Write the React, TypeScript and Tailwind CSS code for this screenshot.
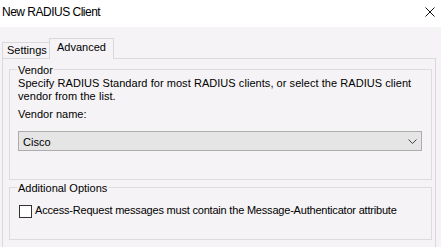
import { useState } from 'react';

const FONT = "font-['Liberation_Sans',Arial,sans-serif]";

function GroupBox({
  title,
  className,
  children,
}: {
  title: string;
  className?: string;
  children: React.ReactNode;
}) {
  return (
    <div className={`border border-[#dcdcdc] pl-[8px] pr-[9px] ${className ?? ''}`}>
      <div className="-mt-[6px] h-[13px] leading-[13px]">
        <span className="-ml-[1px] bg-[#f5f3f5] px-[1px]">{title}</span>
      </div>
      {children}
    </div>
  );
}

export default function App() {
  const [checked, setChecked] = useState(false);

  return (
    <div className={`h-[247px] w-[441px] overflow-hidden bg-[#f5f3f5] text-[11px] leading-[13px] text-black ${FONT}`}>
      {/* title bar */}
      <div className="flex h-[27px] items-start justify-between bg-white pl-[2px] pr-[6px] pt-[5px]">
        <span className="text-[12px] leading-[14px] tracking-[-0.5px]">New RADIUS Client</span>
        <svg width="10" height="10" viewBox="0 0 10 10" className="mt-[2px]">
          <path d="M0.5 0.5L9.5 9.5M9.5 0.5L0.5 9.5" stroke="#111" strokeWidth="1" fill="none" />
        </svg>
      </div>

      <div className="pl-[2px] pr-[5px] pt-[11px]">
        {/* tabs */}
        <div className="relative z-10 flex h-[20px] items-end">
          <div className="h-[16px] w-[47px] border border-b-0 border-r-0 border-[#d9d9d9] pl-[4px] pt-[1px]">
            Settings
          </div>
          <div className="-mb-px h-[21px] w-[65px] border border-b-0 border-[#d9d9d9] bg-[#f5f3f5] pl-[7px] pt-[2px]">
            Advanced
          </div>
        </div>

        {/* tab page */}
        <div className="h-[192px] border border-[#d9d9d9] pl-[6px] pr-[3px] pt-[10px]">
          <GroupBox title="Vendor" className="h-[111px]">
            <p className="tracking-[0.05px]">
              Specify RADIUS Standard for most RADIUS clients, or select the RADIUS client
              <br />
              vendor from the list.
            </p>
            <div className="mt-[5px]">Vendor name:</div>
            <div className="mt-[10px] flex h-[20px] items-start justify-between border border-[#adadad] bg-[#e5e5e5] pl-[4px] pr-[4px] pt-[4px]">
              <span>Cisco</span>
              <svg width="9" height="5" viewBox="0 0 9 5" className="mt-[3px]">
                <path d="M0.5 0.5L4.5 4.5L8.5 0.5" stroke="#444" strokeWidth="1" fill="none" />
              </svg>
            </div>
          </GroupBox>

          <GroupBox title="Additional Options" className="mt-[7px] h-[53px]">
            <label className="mt-[9px] flex items-start gap-[3px]">
              <span
                onClick={() => setChecked(!checked)}
                className="ml-[1px] mt-[1px] h-[13px] w-[13px] border border-[#333] bg-white"
              />
              <span className="tracking-[-0.2px]">
                Access-Request messages must contain the Message-Authenticator attribute
              </span>
            </label>
          </GroupBox>
        </div>
      </div>
    </div>
  );
}
